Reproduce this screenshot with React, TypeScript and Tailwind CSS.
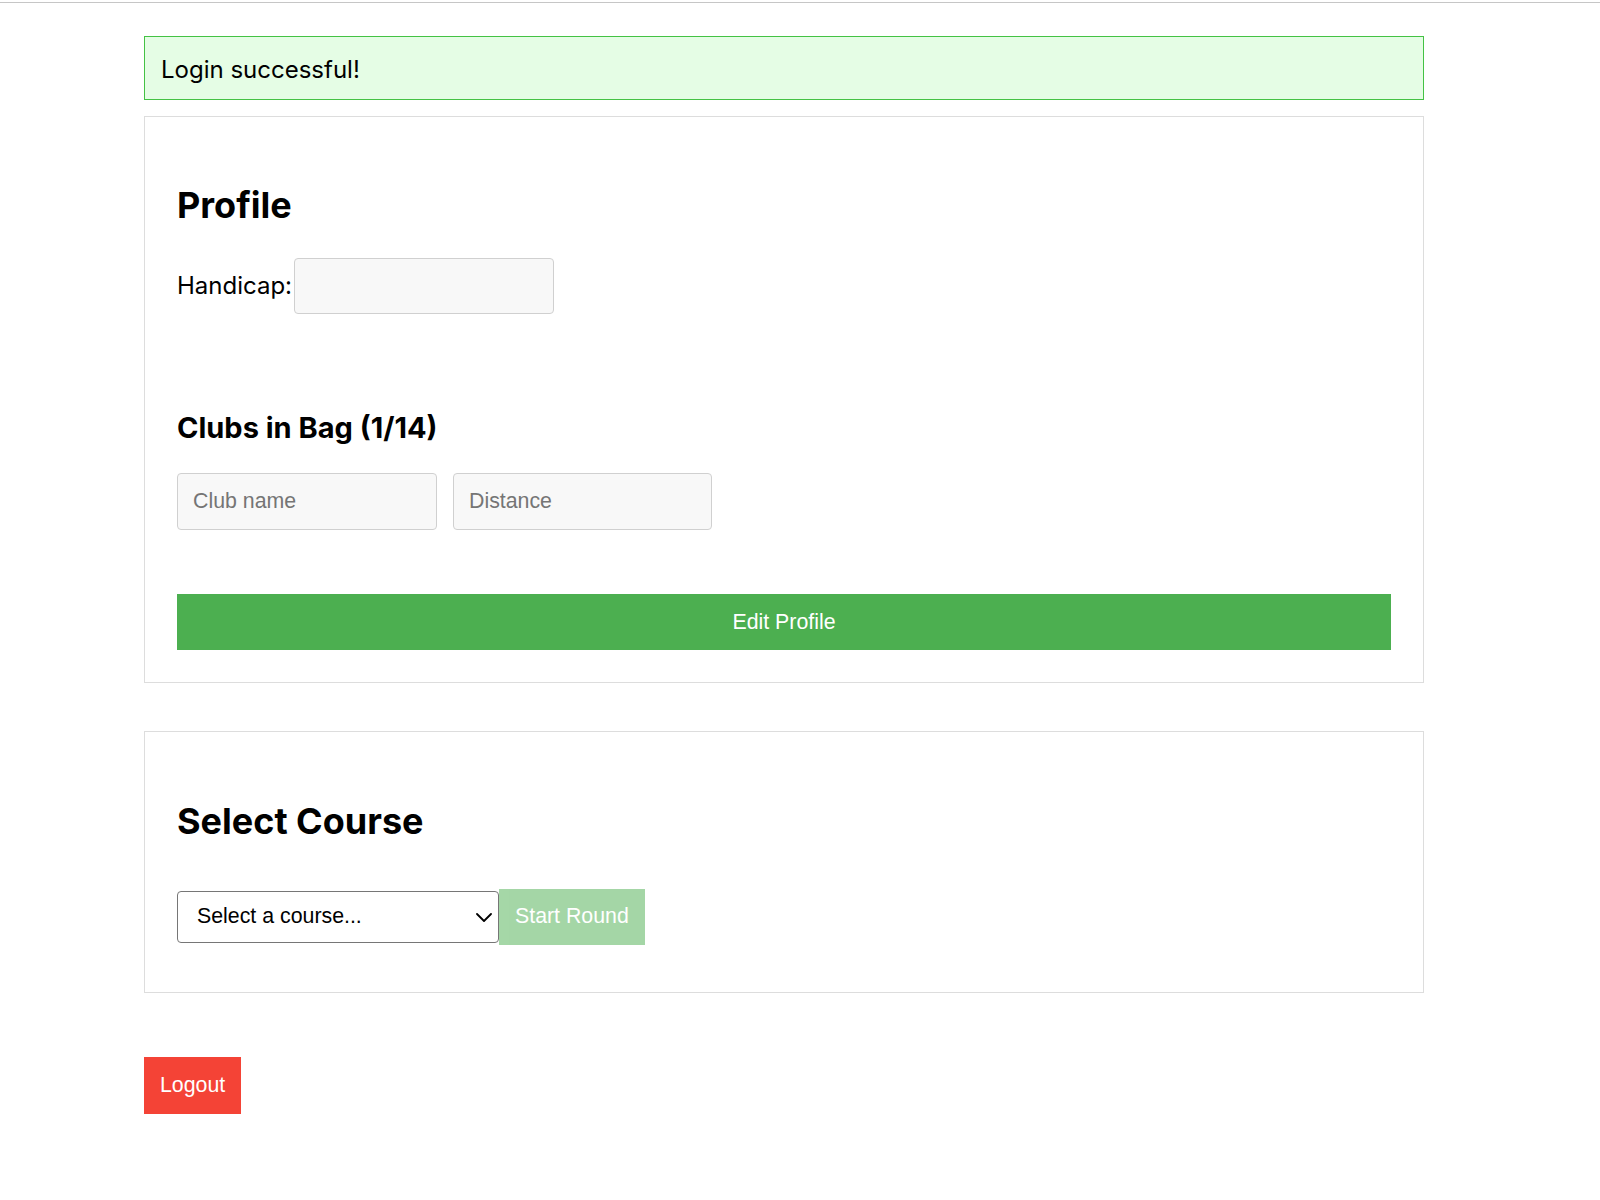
import React from "react";

const controlFont = "font-['Liberation_Sans',Arial,sans-serif] text-[21.33px]";

const Panel = ({ children, className = "" }: { children: React.ReactNode; className?: string }) => (
  <section className={`border border-[#dddddd] bg-white px-8 pt-8 ${className}`}>{children}</section>
);

const App = () => {
  return (
    <div className="min-h-[1200px] bg-white font-['Inter',sans-serif] text-black">
      <div className="pt-[2px]">
        <div className="h-px bg-[#c6c6c6]" />
      </div>

      <main className="ml-[144px] w-[1280px] pt-[33px]">
        <div className="flex h-[64px] items-center border border-[#44c244] bg-[#e5fde5] px-4 pt-[3px] text-[24px] leading-[30px]">
          Login successful!
        </div>

        <Panel className="mt-4 pb-8">
          <h2 className="mt-[34px] mb-[31px] text-[36px] font-bold leading-[44px]">Profile</h2>
          <div className="mt-[5px] flex items-center">
            <label className="pr-[2px] text-[24px] leading-[30px]">Handicap:</label>
            <input
              type="text"
              className={`h-[56px] w-[260px] rounded-[4px] border border-[#d0d0d0] bg-[#f8f8f8] px-[15px] outline-none ${controlFont}`}
            />
          </div>

          <h3 className="mt-[97px] mb-[28px] text-[29px] font-bold leading-[34px]">Clubs in Bag (1/14)</h3>
          <div className="flex gap-4">
            <input
              type="text"
              placeholder="Club name"
              className={`h-[57px] w-[260px] rounded-[4px] border border-[#d0d0d0] bg-[#f8f8f8] px-[15px] outline-none placeholder:text-[#757575] ${controlFont}`}
            />
            <input
              type="text"
              placeholder="Distance"
              className={`h-[57px] w-[259px] rounded-[4px] border border-[#d0d0d0] bg-[#f8f8f8] px-[15px] outline-none placeholder:text-[#757575] ${controlFont}`}
            />
          </div>

          <button className={`mt-[64px] flex h-[56px] w-full items-center justify-center bg-[#4caf50] pt-[2px] text-white ${controlFont}`}>
            Edit Profile
          </button>
        </Panel>

        <Panel className="mt-[48px] pb-[47px]">
          <h2 className="mt-[35px] mb-[30px] text-[36px] font-bold leading-[44px]">Select Course</h2>
          <div className="mt-[46px] flex items-center">
            <div className="relative">
              <select
                className={`h-[52px] w-[322px] appearance-none rounded-[4px] border border-[#767676] bg-white pl-[19px] pr-8 text-black outline-none ${controlFont}`}
                defaultValue=""
              >
                <option value="">Select a course...</option>
              </select>
              <svg
                className="pointer-events-none absolute right-[7px] top-[22px]"
                width="16"
                height="9"
                viewBox="0 0 16 9"
                fill="none"
                stroke="#000"
                strokeWidth="1.8"
                strokeLinecap="round"
                strokeLinejoin="round"
              >
                <path d="M1 1l7 7 7-7" />
              </svg>
            </div>
            <button
              disabled
              className={`flex h-[56px] items-center bg-[#4caf50] px-4 text-white opacity-50 ${controlFont}`}
            >
              Start Round
            </button>
          </div>
        </Panel>

        <button className={`mt-[64px] flex h-[57px] items-center bg-[#f44336] px-4 text-white ${controlFont}`}>
          Logout
        </button>
      </main>
    </div>
  );
};

export default App;
